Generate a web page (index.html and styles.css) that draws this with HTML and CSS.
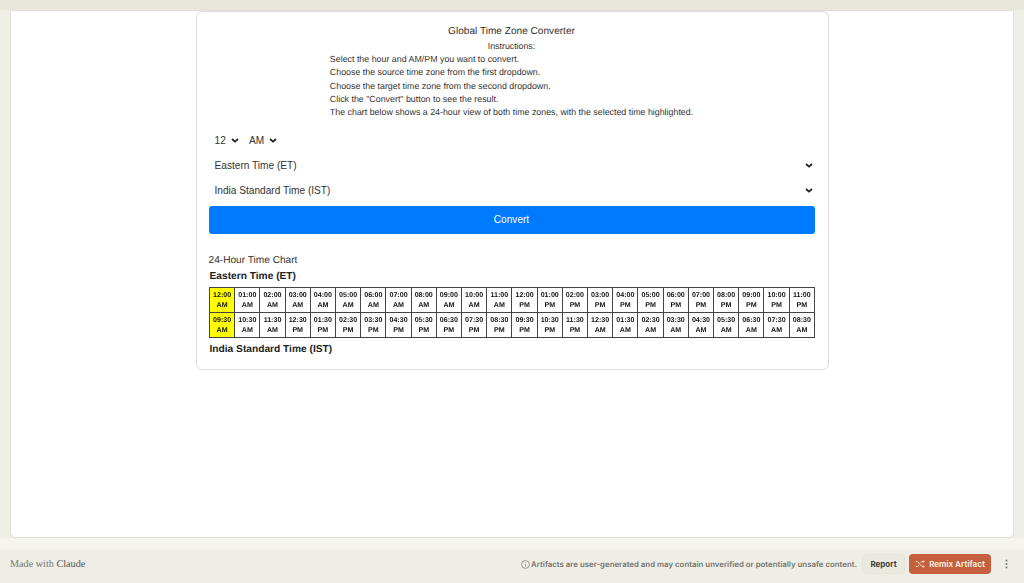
FILE: index.html
```html
<!DOCTYPE html>
<html lang="en">
<head>
    <meta charset="UTF-8">
    <meta name="viewport" content="width=device-width, initial-scale=1.0">
    <title>Global Time Zone Converter</title>
    <link rel="stylesheet" href="styles.css">
</head>
<body>
    <div class="frame">
        <div class="card">
            <h1 class="title">Global Time Zone Converter</h1>
            <div class="instructions">
                <h2 class="instructions-title">Instructions:</h2>
                <ol class="steps">
                    <li>Select the hour and AM/PM you want to convert.</li>
                    <li>Choose the source time zone from the first dropdown.</li>
                    <li>Choose the target time zone from the second dropdown.</li>
                    <li>Click the "Convert" button to see the result.</li>
                    <li>The chart below shows a 24-hour view of both time zones, with the selected time highlighted.</li>
                </ol>
            </div>

            <div class="time-row">
                <select class="picker picker-hour"><option>12</option></select>
                <select class="picker picker-ampm"><option>AM</option></select>
            </div>
            <select class="picker picker-zone"><option>Eastern Time (ET)</option></select>
            <select class="picker picker-zone"><option>India Standard Time (IST)</option></select>
            <button class="convert-button">Convert</button>

            <div class="chart-title">24-Hour Time Chart</div>
            <div class="zone-label">Eastern Time (ET)</div>
            <table class="chart">
                <tr>
                    <td class="selected">12:00 AM</td><td>01:00 AM</td><td>02:00 AM</td><td>03:00 AM</td><td>04:00 AM</td><td>05:00 AM</td><td>06:00 AM</td><td>07:00 AM</td><td>08:00 AM</td><td>09:00 AM</td><td>10:00 AM</td><td>11:00 AM</td>
                    <td>12:00 PM</td><td>01:00 PM</td><td>02:00 PM</td><td>03:00 PM</td><td>04:00 PM</td><td>05:00 PM</td><td>06:00 PM</td><td>07:00 PM</td><td>08:00 PM</td><td>09:00 PM</td><td>10:00 PM</td><td>11:00 PM</td>
                </tr>
                <tr>
                    <td class="selected">09:30 AM</td><td>10:30 AM</td><td>11:30 AM</td><td>12:30 PM</td><td>01:30 PM</td><td>02:30 PM</td><td>03:30 PM</td><td>04:30 PM</td><td>05:30 PM</td><td>06:30 PM</td><td>07:30 PM</td><td>08:30 PM</td>
                    <td>09:30 PM</td><td>10:30 PM</td><td>11:30 PM</td><td>12:30 AM</td><td>01:30 AM</td><td>02:30 AM</td><td>03:30 AM</td><td>04:30 AM</td><td>05:30 AM</td><td>06:30 AM</td><td>07:30 AM</td><td>08:30 AM</td>
                </tr>
            </table>
            <div class="zone-label zone-label-bottom">India Standard Time (IST)</div>
        </div>
    </div>

    <div class="footer">
        <div class="made-with">Made with <span class="claude">Claude</span></div>
        <div class="footer-right">
            <svg class="info-icon" width="9" height="9" viewBox="0 0 9 9" fill="none" stroke="#77756e" stroke-width="0.7"><circle cx="4.5" cy="4.5" r="3.9"/><path d="M4.5 4v2.6M4.5 2.4v.8"/></svg>
            <span class="disclaimer">Artifacts are user-generated and may contain unverified or potentially unsafe content.</span>
            <button class="report-button">Report</button>
            <button class="remix-button">
                <svg width="10" height="10" viewBox="0 0 12 12" fill="none" stroke="#f3d9cd" stroke-width="1.1"><path d="M1 3h2.200l5 6H11M1 9h2.200l1.600-2M6.800 4.800 8.200 3H11M9.500 1.500 11 3 9.500 4.500M9.500 7.500 11 9 9.500 10.500"/></svg>
                Remix Artifact
            </button>
            <svg class="more-icon" width="3" height="10" viewBox="0 0 3 10" fill="#6f6d66"><circle cx="1.500" cy="1.500" r="0.900"/><circle cx="1.500" cy="5" r="0.900"/><circle cx="1.500" cy="8.500" r="0.900"/></svg>
        </div>
    </div>
</body>
</html>
```
FILE: styles.css
```css
* {
    box-sizing: border-box;
}
html, body {
    height: 100%;
}
body {
    margin: 0;
    height: 583px;
    overflow: hidden;
    display: flex;
    flex-direction: column;
    font-family: "Liberation Sans", Arial, sans-serif;
    text-rendering: geometricPrecision;
    background-color: #f0efe7;
    border-top: 10px solid #e8e5da;
}
.frame {
    height: 528px;
    margin: 0 10px;
    padding-top: 1px;
    background-color: white;
    border: 1px solid #e2e0d7;
    border-radius: 0 0 6px 6px;
    display: flex;
    justify-content: center;
}
.card {
    width: 633px;
    height: 359px;
    margin-top: -1px;
    padding: 12px 13px 0 12px;
    background-color: white;
    border: 1px solid #dcdcdc;
    border-radius: 6px;
    display: flex;
    flex-direction: column;
    color: #333;
}
.title {
    margin: 0;
    font-size: 10.1px;
    line-height: 14px;
    font-weight: normal;
    text-align: center;
    padding-top: 1px;
}
.instructions {
    display: flex;
    flex-direction: column;
    align-items: center;
}
.instructions-title {
    margin: 0;
    font-size: 8.8px;
    line-height: 14px;
    font-weight: normal;
}
.steps {
    margin: 0;
    padding: 0;
    list-style: none;
    font-size: 8.85px;
    line-height: 13.33px;
}
.time-row {
    display: flex;
    margin-top: 9px;
}
.picker {
    height: 24.5px;
    border: none;
    padding: 0;
    appearance: none;
    outline: none;
    color: #333;
    font-family: "Liberation Sans", Arial, sans-serif;
    font-size: 10.15px;
    background-color: white;
    background-image: url("data:image/svg+xml,%3Csvg xmlns='http://www.w3.org/2000/svg' width='8' height='5' viewBox='0 0 8 5'%3E%3Cpath d='M1 1l3 2.700L7 1' fill='none' stroke='%23222' stroke-width='1.700'/%3E%3C/svg%3E");
    background-repeat: no-repeat;
    background-position: right 2px center;
    flex-shrink: 0;
}
.picker-hour {
    width: 26px;
    margin-left: 6px;
}
.picker-ampm {
    width: 30px;
    margin-left: 8.5px;
}
.picker-zone {
    width: calc(100% - 6px);
    margin-left: 6px;
}
.picker-zone:nth-of-type(2) {
    margin-top: 0.5px;
}
.convert-button {
    height: 28px;
    margin-top: 3px;
    flex-shrink: 0;
    border: none;
    border-radius: 3px;
    background-color: #007bff;
    color: white;
    font-family: "Liberation Sans", Arial, sans-serif;
    font-size: 10.1px;
}
.chart-title {
    margin-top: 20.5px;
    font-size: 10.15px;
    line-height: 14px;
    color: #333;
}
.zone-label {
    margin: 0.5px 0 3px 1px;
    font-size: 10.2px;
    line-height: 15px;
    font-weight: bold;
    color: #222;
}
.zone-label-bottom {
    margin-top: 4px;
}
.chart {
    width: 606px;
    flex-shrink: 0;
    table-layout: fixed;
    border-collapse: collapse;
    will-change: transform;
}
.chart td {
    height: 25px;
    padding: 0 1px;
    border: 1px solid #444;
    font-size: 7.1px;
    line-height: 10.5px;
    font-weight: bold;
    text-align: center;
    color: #111;
}
.chart .selected {
    background-color: #ffff00;
}
.footer {
    flex: 1;
    display: flex;
    justify-content: space-between;
    align-items: center;
    padding: 7px 16px 0 10px;
    color: #77756e;
    background: linear-gradient(#f5f4ee 9px, #efeee6 12px);
}
.made-with {
    font-family: "Liberation Serif", serif;
    font-size: 10.2px;
}
.claude {
    color: #55534d;
}
.footer-right {
    display: flex;
    align-items: center;
    font-family: Inter, sans-serif;
    font-size: 7.85px;
    font-weight: 600;
}
.disclaimer {
    margin-left: 1px;
}
.report-button {
    height: 20px;
    width: 43px;
    margin-left: 5px;
    border: 1px solid #e6e3d8;
    border-radius: 4px;
    background-color: #ebe9df;
    color: #3d3c37;
    font-family: Inter, sans-serif;
    font-size: 8px;
    font-weight: 700;
}
.remix-button {
    height: 20px;
    width: 82px;
    margin-left: 4px;
    padding: 0;
    border: none;
    border-radius: 4px;
    background-color: #c4603c;
    color: #f8e6dd;
    font-family: Inter, sans-serif;
    font-size: 8px;
    font-weight: 700;
    white-space: nowrap;
    display: flex;
    align-items: center;
    justify-content: center;
    gap: 4px;
}
.more-icon {
    margin-left: 14px;
}
```
